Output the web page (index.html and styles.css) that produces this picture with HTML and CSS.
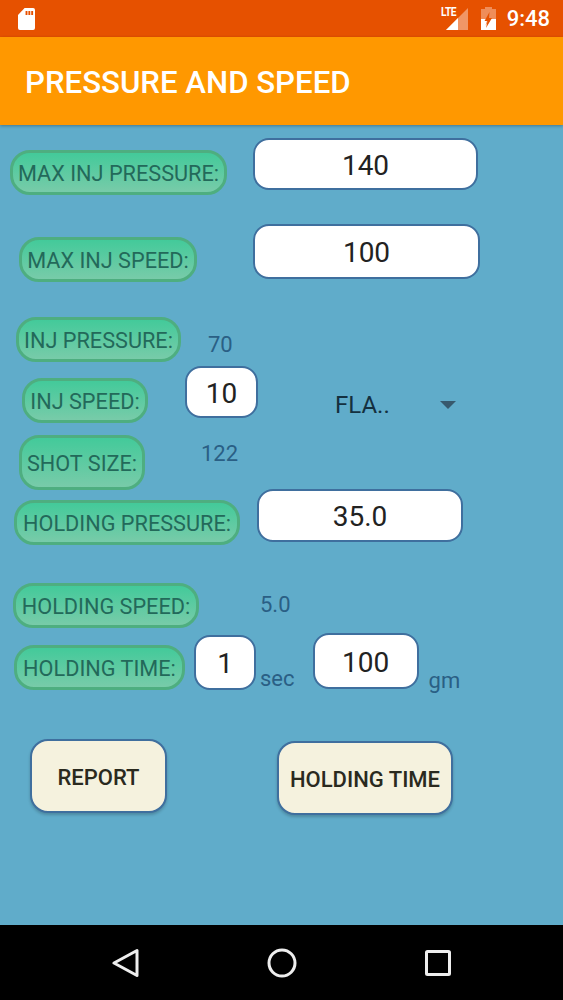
FILE: index.html
```html
<!DOCTYPE html>
<html lang="en">
<head>
  <meta charset="UTF-8" />
  <meta name="viewport" content="width=device-width, initial-scale=1.0"/>
  <title>Pressure and Speed</title>
  <link rel="stylesheet" href="styles.css">
</head>
<body>

  <div class="status-bar">
    <svg class="sd-icon" width="17" height="22" viewBox="0 0 18 22" preserveAspectRatio="none">
      <path d="M7 0H16a2 2 0 0 1 2 2V20a2 2 0 0 1-2 2H2a2 2 0 0 1-2-2V7z" fill="#fff"/>
      <path d="M8 3h2v4H8zM11 3h2v4h-2zM14 3h2v4h-2z" fill="#e65100"/>
    </svg>
    <div class="status-right">
      <span class="lte">LTE</span>
      <svg class="signal-icon" width="22" height="22" viewBox="0 0 22 22">
        <path d="M0 22L22 0V22z" fill="#fff" fill-opacity="0.4"/>
        <path d="M0 22L12 10V22z" fill="#fff"/>
      </svg>
      <svg class="battery-icon" width="15" height="23" viewBox="0 0 15 23">
        <path d="M4 0H11V2H15V23H0V2H4z" fill="#fff" fill-opacity="0.35"/>
        <path d="M0 12H6.5L4.5 18.5L9 12H15V23H0z" fill="#fff"/>
        <path d="M8.5 5L3.5 14H6.5L5 21L11 11H8z" fill="#e65100"/>
      </svg>
      <span class="clock">9:48</span>
    </div>
  </div>

  <div class="app-bar">PRESSURE AND SPEED</div>

  <div class="content">
    <div class="row row-max-pressure">
      <div class="pill">MAX INJ PRESSURE:</div>
      <input class="field field-max-pressure" type="text" value="140" />
    </div>

    <div class="row row-max-speed">
      <div class="pill">MAX INJ SPEED:</div>
      <input class="field field-max-speed" type="text" value="100" />
    </div>

    <div class="row row-pressure">
      <div class="pill">INJ PRESSURE:</div>
      <span class="value value-pressure">70</span>
    </div>

    <div class="row row-speed">
      <div class="pill">INJ SPEED:</div>
      <input class="field field-speed" type="text" value="10" />
      <div class="dropdown">
        <span>FLA..</span>
        <span class="arrow"></span>
      </div>
    </div>

    <div class="row row-shot">
      <div class="pill pill-tall">SHOT SIZE:</div>
      <span class="value value-shot">122</span>
    </div>

    <div class="row row-holding-pressure">
      <div class="pill">HOLDING PRESSURE:</div>
      <input class="field field-holding-pressure" type="text" value="35.0" />
    </div>

    <div class="row row-holding-speed">
      <div class="pill">HOLDING SPEED:</div>
      <span class="value value-holding-speed">5.0</span>
    </div>

    <div class="row row-holding-time">
      <div class="pill">HOLDING TIME:</div>
      <input class="field field-time" type="text" value="1" />
      <span class="value unit unit-sec">sec</span>
      <input class="field field-weight" type="text" value="100" />
      <span class="value unit unit-gm">gm</span>
    </div>

    <div class="row row-buttons">
      <button class="action action-report">REPORT</button>
      <button class="action action-holding">HOLDING TIME</button>
    </div>
  </div>

  <div class="nav-bar">
    <svg width="28" height="30" viewBox="0 0 28 30">
      <path d="M25 2.5V27.5L2 15z" fill="none" stroke="#eee" stroke-width="3" stroke-linejoin="round"/>
    </svg>
    <svg class="nav-home" width="30" height="30" viewBox="0 0 30 30">
      <circle cx="15" cy="15" r="13" fill="none" stroke="#eee" stroke-width="3"/>
    </svg>
    <svg width="26" height="26" viewBox="0 0 26 26">
      <rect x="1.5" y="1.5" width="23" height="23" rx="1" fill="none" stroke="#eee" stroke-width="3"/>
    </svg>
  </div>

</body>
</html>
```

FILE: styles.css
```css
* {
  box-sizing: border-box;
}
body {
  margin: 0;
  width: 563px;
  height: 1000px;
  overflow: hidden;
  display: flex;
  flex-direction: column;
  font-family: 'Roboto', 'Liberation Sans', sans-serif;
  background: #60acca;
}

/* status bar */
.status-bar {
  height: 37px;
  flex: none;
  background: #e65100;
  display: flex;
  align-items: center;
  justify-content: space-between;
  padding: 0 13px 0 18px;
  color: white;
}
.status-right {
  display: flex;
  align-items: center;
  position: relative;
}
.lte {
  position: absolute;
  left: 9px;
  top: -1px;
  font-size: 12px;
  font-weight: 700;
  line-height: 12px;
  letter-spacing: -0.5px;
  transform: scaleX(0.85);
  transform-origin: left;
}
.signal-icon {
  margin-left: 14px;
}
.battery-icon {
  margin-left: 13px;
}
.clock {
  margin-left: 11px;
  font-size: 22px;
  font-weight: 500;
  line-height: 24px;
}

/* app bar */
.app-bar {
  height: 88px;
  flex: none;
  background: #ff9800;
  color: white;
  font-size: 31.2px;
  font-weight: 500;
  display: flex;
  align-items: center;
  padding: 2px 0 0 25px;
  box-shadow: 0 1px 3px rgba(0,0,0,0.3);
  position: relative;
}

/* form */
.content {
  flex: 1;
  padding-top: 13px;
  display: flex;
  flex-direction: column;
}
.row {
  display: flex;
  align-items: flex-start;
}
.pill {
  height: 45px;
  padding: 1px 0 0;
  border: 3px solid #4eae80;
  border-radius: 20px;
  background: linear-gradient(#43ca9a, #78cba9);
  color: #23695a;
  font-size: 21.7px;
  white-space: nowrap;
  display: flex;
  align-items: center;
  justify-content: center;
}
.pill-tall {
  height: 55px;
  width: 126px;
}
.field {
  display: block;
  padding: 2px 0 0;
  border: 2px solid #3f6f9e;
  border-radius: 16px;
  background: white;
  color: #222;
  font-family: inherit;
  font-size: 28px;
  text-align: center;
}
.value {
  color: #2a5f85;
  font-size: 22px;
  line-height: 26px;
}

.row-max-pressure { padding-left: 10px; }
.row-max-pressure .pill { margin-top: 12px; width: 217px; }
.field-max-pressure { margin-left: 26px; width: 225px; height: 52px; }

.row-max-speed { margin-top: 29px; padding-left: 19px; }
.row-max-speed .pill { margin-top: 13px; width: 178px; }
.field-max-speed { margin-left: 56px; width: 227px; height: 55px; }

.row-pressure { margin-top: 35px; padding-left: 16px; }
.row-pressure .pill { width: 165px; }
.value-pressure { margin-left: 27px; margin-top: 15px; }

.row-speed { margin-top: 4px; padding-left: 22px; }
.row-speed .pill { margin-top: 12px; width: 126px; }
.field-speed { margin-left: 37px; width: 73px; height: 52px; }
.dropdown {
  margin-left: 77px;
  margin-top: 25px;
  width: 121px;
  display: flex;
  align-items: center;
  justify-content: space-between;
  color: #14303f;
  font-size: 24px;
  line-height: 28px;
}
.arrow {
  width: 0;
  height: 0;
  border-left: 8px solid transparent;
  border-right: 8px solid transparent;
  border-top: 8px solid #37596d;
}

.row-shot { margin-top: 12px; padding-left: 19px; }
.value-shot { margin-left: 56px; margin-top: 6px; }

.row-holding-pressure { margin-top: -1px; padding-left: 14px; }
.row-holding-pressure .pill { margin-top: 11px; width: 226px; }
.field-holding-pressure { margin-left: 17px; width: 206px; height: 53px; }

.row-holding-speed { margin-top: 38px; padding-left: 13px; }
.row-holding-speed .pill { width: 186px; }
.value-holding-speed { margin-left: 61px; margin-top: 9px; }

.row-holding-time { margin-top: 5px; padding-left: 14px; }
.row-holding-time .pill { margin-top: 12px; width: 171px; }
.field-time { margin-left: 9px; margin-top: 2px; width: 62px; height: 55px; }
.unit-sec { margin-left: 4px; margin-top: 33px; }
.field-weight { margin-left: 18px; width: 106px; height: 56px; }
.unit-gm { margin-left: 10px; margin-top: 35px; }

/* bottom buttons */
.row-buttons { margin-top: 45px; padding-left: 30px; }
.action {
  padding: 2px 0 0;
  border: 2px solid #3f6f9e;
  border-radius: 18px;
  background: #f5f2de;
  color: #2a2a1e;
  font-family: inherit;
  font-size: 22px;
  font-weight: 500;
  box-shadow: 0 2px 3px rgba(0,0,0,0.2);
}
.action-report { width: 137px; height: 74px; }
.action-holding { margin-left: 110px; margin-top: 2px; width: 176px; height: 74px; }

/* nav bar */
.nav-bar {
  height: 75px;
  flex: none;
  background: black;
  display: flex;
  align-items: center;
  justify-content: space-between;
  padding: 0 112px;
}
.nav-home {
  margin-left: -1px;
  margin-right: 1px;
}
```
